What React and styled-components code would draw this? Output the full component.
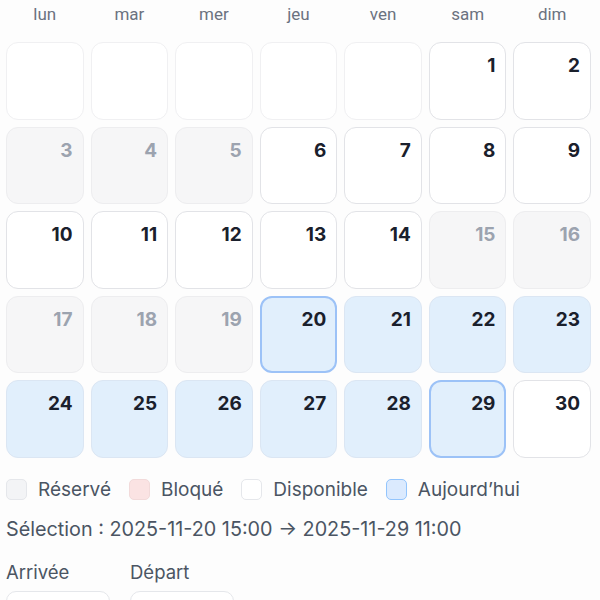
import React from 'react';
import styled, { createGlobalStyle } from 'styled-components';

const days = ['lun', 'mar', 'mer', 'jeu', 'ven', 'sam', 'dim'];

// state per day of November 2025
const cellFor = (d) => {
  if ([3, 4, 5, 15, 16, 17, 18, 19].includes(d)) return 'past';
  if (d === 20 || d === 29) return 'edge';
  if (d > 20 && d < 29) return 'range';
  return 'free';
};

const cells = [
  ...Array(5).fill(null),
  ...Array.from({ length: 30 }, (_, i) => i + 1),
];

const legend = [
  { label: 'Réservé', kind: 'reserved' },
  { label: 'Bloqué', kind: 'blocked' },
  { label: 'Disponible', kind: 'free' },
  { label: 'Aujourd’hui', kind: 'today' },
];

const App = () => {
  return (
    <Wrapper>
      <GlobalStyle />
      <WeekRow>
        {days.map((d) => (
          <WeekDay key={d}>{d}</WeekDay>
        ))}
      </WeekRow>
      <Grid>
        {cells.map((d, i) =>
          d === null ? (
            <Cell key={i} $kind="empty" />
          ) : (
            <Cell key={i} $kind={cellFor(d)}>
              {d}
            </Cell>
          )
        )}
      </Grid>
      <Legend>
        {legend.map((l) => (
          <LegendItem key={l.label}>
            <Swatch $kind={l.kind} />
            {l.label}
          </LegendItem>
        ))}
      </Legend>
      <Selection>Sélection : 2025-11-20 15:00 → 2025-11-29 11:00</Selection>
      <Fields>
        <Field>
          <Label>Arrivée</Label>
          <Input />
        </Field>
        <Field>
          <Label>Départ</Label>
          <Input />
        </Field>
      </Fields>
    </Wrapper>
  );
};

const GlobalStyle = createGlobalStyle`
  body {
    margin: 0;
    background: #fdfdfd;
    font-family: Inter, "Liberation Sans", sans-serif;
    overflow: hidden;
  }
`;

const Wrapper = styled.div`
  padding: 2px 9px 0 6px;
`;

const WeekRow = styled.div`
  display: grid;
  grid-template-columns: repeat(7, 1fr);
  gap: 7px;
  margin-bottom: 16px;
`;

const WeekDay = styled.div`
  text-align: center;
  font-family: Roboto, Inter, sans-serif;
  font-size: 17px;
  line-height: 24px;
  color: #6b7280;
`;

const Grid = styled.div`
  display: grid;
  grid-template-columns: repeat(7, 1fr);
  gap: 7px;
`;

const cellStyles = {
  empty: 'background: #fff; border: 1px solid #f0f0f2; color: transparent;',
  past: 'background: #f6f6f7; border: 1px solid #ededef; color: #9ca3af;',
  free: 'background: #fff; border: 1px solid #e2e3e7; color: #1a202c;',
  range: 'background: #e1effc; border: 1px solid #dbe6f3; color: #1a202c;',
  edge: 'background: #e1effc; border: 2px solid #9cc2f7; color: #1a202c;',
};

const Cell = styled.div`
  box-sizing: border-box;
  aspect-ratio: 1 / 1;
  border-radius: 12px;
  padding: ${(p) => (p.$kind === 'edge' ? '10px 9px' : '11px 10px')};
  text-align: right;
  font-size: 19px;
  font-weight: 700;
  line-height: 24px;
  ${(p) => cellStyles[p.$kind]}
`;

const Legend = styled.div`
  display: flex;
  align-items: center;
  gap: 18px;
  margin-top: 20px;
  font-size: 19px;
  color: #4b5563;
`;

const LegendItem = styled.div`
  display: flex;
  align-items: center;
  gap: 11px;
`;

const swatchStyles = {
  reserved: 'background: #f3f4f6; border-color: #e5e7eb;',
  blocked: 'background: #fbe3e3; border-color: #f2dada;',
  free: 'background: #fff; border-color: #e5e7eb;',
  today: 'background: #dbeafe; border-color: #93c5fd;',
};

const Swatch = styled.span`
  box-sizing: border-box;
  width: 21px;
  height: 21px;
  border-radius: 5px;
  border: 1px solid;
  ${(p) => swatchStyles[p.$kind]}
`;

const Selection = styled.div`
  margin-top: 16px;
  font-size: 19.8px;
  line-height: 24px;
  color: #4b5563;
`;

const Fields = styled.div`
  display: flex;
  gap: 20px;
  margin-top: 20px;
`;

const Field = styled.div`
  display: flex;
  flex-direction: column;
  gap: 8px;
`;

const Label = styled.div`
  font-size: 18.5px;
  line-height: 22px;
  color: #4b5563;
`;

const Input = styled.div`
  box-sizing: border-box;
  width: 104px;
  height: 36px;
  border: 1px solid #e5e7eb;
  border-radius: 10px;
  background: #fff;
`;

export default App;
